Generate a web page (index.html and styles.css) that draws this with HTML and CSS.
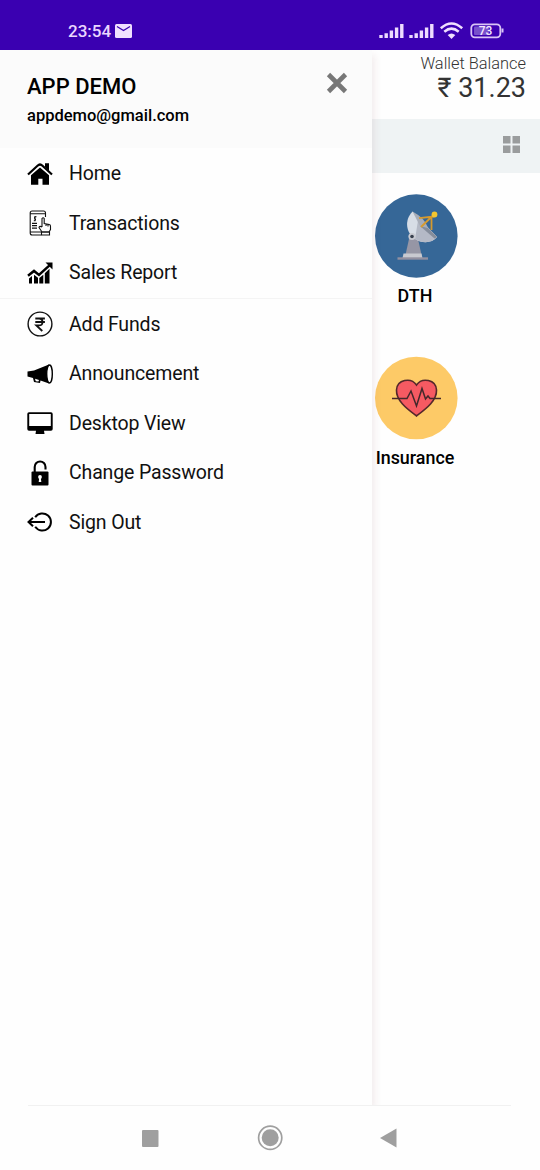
FILE: index.html
```
<!DOCTYPE html>
<html lang="en">
<head>
<meta charset="utf-8">
<title>App Demo</title>
<link rel="stylesheet" href="styles.css">
</head>
<body>
<div class="screen">
  <header class="status">
    <div class="status-left"><span class="clock">23:54</span>
      <svg width="17" height="14" viewBox="0 0 17 14"><rect width="17" height="14" rx="1.5" fill="#f0e0ff"/><path d="M2 2.500 8.500 6.500 15 2.500" fill="none" stroke="#3a00b1" stroke-width="1.3"/></svg>
    </div>
    <svg class="status-icons" width="126" height="18" viewBox="0 0 126 18">
      <g stroke="#eedcff" stroke-width="3.400">
        <path d="M2 13v3M7.200 11.200V16M12.400 8.500V16M17.600 5.500V16M22.800 2V16"/>
        <path d="M32 13v3M37.200 11.200V16M42.400 8.500V16M47.600 5.500V16M52.800 2V16"/>
      </g>
      <g fill="none" stroke="#f0e0ff" stroke-width="2.500"><path d="M61.800 6.300Q72.500-3.300 83.200 6.300M65.300 9.700q7.200-6.200 14.400 0"/></g>
      <path d="M68.700 13q3.800-3 7.600 0l-3.800 4z" fill="#f0e0ff"/>
      <rect x="92.300" y="2.300" width="29" height="13" rx="3.500" fill="none" stroke="#d9c3f6" stroke-width="1.800"/>
      <rect x="95" y="4.500" width="15" height="8.600" rx="1" fill="#7850cb"/>
      <path d="M123.500 6.500v4" stroke="#d9c3f6" stroke-width="2"/>
      <text x="106.500" y="13.200" class="battery">73</text>
    </svg>
  </header>
  <main class="body">
    <aside class="drawer">
      <div class="profile">
        <div><div class="name">APP DEMO</div><div class="email">appdemo@gmail.com</div></div>
        <svg class="close" width="22" height="22" viewBox="0 0 22 22"><path d="M2.500 2.500l17 17m0-17l-17 17" stroke="#777" stroke-width="4.600"/></svg>
      </div>
      <nav class="menu">
        <a class="item"><svg class="icon" viewBox="0 0 26 26"><path d="M18 2.300h4v7.500l-4-3.700zM4 14.300 13 6.500l9 7.800V23.700h-6.500v-6h-4.200v6H4z"/><path d="M1 13.500 10.500 4.700Q13 2.300 15.500 4.700L25 13.500" fill="none" stroke="#000" stroke-width="2.200"/></svg><span class="label">Home</span></a>
        <a class="item"><svg class="icon" viewBox="0 0 26 26"><g fill="none" stroke="#111" stroke-width="1.100"><path d="M18.500 7V3q0-2-2-2H5.200q-2 0-2 2v20q0 2 2 2h9M3.200 3.700h15.300M3.200 22h11"/><path d="M5 13.300h5M5 15.700h5M5 18.200h5" stroke-width="1.300"/><path d="M9.500 6.800H8q-1 1.500 0 1.900t0 2H6.800M8 6v5.300"/><path d="M15 17V8.500q1.200-1.500 2.200 0v5l5 1q1.500.3 1.300 2v3l-1.500 2.500h-7l-3-4.500q.5-2 3-.5M19 14v2M21 14.500v2"/><path d="M14.500 22h8v3h-8z"/></g></svg><span class="label">Transactions</span></a>
        <a class="item"><svg class="icon" viewBox="0 0 26 26"><path d="M2 18.500 5 16v7.500H2zM7 14.800l4 3v5.700H7zM12.300 18l4-3.300v8.800h-4zM17.800 13.200l4.700-4.500v14.800h-4.700z"/><path d="M1 15.700 7 10.900l5 4L22.500 5.400" fill="none" stroke="#000" stroke-width="2.500"/><path d="M18.500 2.600h7v6.800z"/></svg><span class="label">Sales Report</span></a>
        <div class="divider"></div>
        <a class="item"><svg class="icon" viewBox="0 0 26 26"><g fill="none" stroke="#111"><circle cx="13" cy="13" r="11.900" stroke-width="1.400"/><path d="M8.300 7.500h9.600M8.300 11h9.600M9 7.500h3q3.500 0 3.500 3.500T12 14.400H9.300l6 5.600" stroke-width="1.800"/></g></svg><span class="label">Add Funds</span></a>
        <a class="item"><svg class="icon" viewBox="0 0 26 26"><path d="M.5 10.500 7 9.500 22 3.500v19L13.500 19.500 13 22 7 21 6 17 .5 15.500z"/><ellipse cx="22.500" cy="13" rx="2.800" ry="9" fill="#fff" stroke="#000" stroke-width="1.400"/><path d="m8 17.700 4 1.200-.6 1.700-2.600-.4z" fill="#fff"/></svg><span class="label">Announcement</span></a>
        <a class="item"><svg class="icon" viewBox="0 0 26 26"><path fill-rule="evenodd" d="M2 2.300h22q1.700 0 1.700 1.700v15q0 1.700-1.700 1.700h-7l.5 3.300h-9l.5-3.300H2Q.3 20.700.3 19V4Q.3 2.300 2 2.300zm.2 1.700v11.900h21.600V4z"/></svg><span class="label">Desktop View</span></a>
        <a class="item"><svg class="icon" viewBox="0 0 26 26"><path d="M7.700 13V6.900a5.400 5.400 0 0 1 10.800 0v2.500" fill="none" stroke="#000" stroke-width="2.100"/><rect x="4.500" y="11.600" width="17" height="14" rx="1"/><circle cx="13" cy="17" r="1.900" fill="#fff"/><path d="M12.200 17.500h1.600l.5 4.500h-2.600z" fill="#fff"/></svg><span class="label">Change Password</span></a>
        <a class="item"><svg class="icon" viewBox="0 0 26 26"><path d="M8.200 8.200a8.600 8.600 0 1 1 0 9.600M18 13H2M6 8.700 1.500 13 6 17.300" fill="none" stroke="#000" stroke-width="2"/></svg><span class="label">Sign Out</span></a>
      </nav>
    </aside>
    <section class="content">
      <div class="wallet"><div class="wallet-label">Wallet Balance</div><div class="amount">₹ 31.23</div></div>
      <div class="toolbar"><svg width="17" height="17" viewBox="0 0 17 17"><path d="M0 0h7.500v7.500H0zM9.500 0H17v7.500H9.500zM0 9.500h7.500V17H0zM9.500 9.500H17V17H9.500z" fill="#9a9c9d"/></svg></div>
      <div class="services">
        <div class="service">
          <svg width="83" height="84" viewBox="0 0 83 84"><ellipse cx="41.300" cy="42" rx="41.300" ry="41.800" fill="#366797"/>
            <path d="M34 45h9l4 18H30z" fill="#9696a5"/>
            <path d="M37.500 17.500C29 26 31 39 40 45 48 50 57 49 62 43z" fill="#d7dde6"/>
            <path d="M43.500 23.500 62 43C57 49 48 50 40 45z" fill="#b4b9c6"/>
            <path d="M37.500 17.500Q50 24 53 34L45 32z" fill="#a8adb8"/>
            <path d="M53 34 62 43l-2.500 1.500L45 32z" fill="#858d9b"/>
            <path d="M44 24.200 59 22.500M56.500 36V23M46 33 59 20.500" fill="none" stroke="#d69a2e" stroke-width="1.800"/>
            <circle cx="59.500" cy="20.500" r="2.900" fill="#f4c62f"/>
            <circle cx="37" cy="42.500" r="3.600" fill="#c9cbd2"/><circle cx="37" cy="42.500" r="1.800" fill="#38404e"/><path d="M28.500 59.500h18l1 4.500h-20z" fill="#c8c9d0"/><path d="M22.500 63.300h30.500v2.400H22.500z" fill="#9290a0"/></svg>
          <div class="service-name">DTH</div>
        </div>
        <div class="service">
          <svg width="83" height="84" viewBox="0 0 83 84"><circle cx="41.300" cy="42" r="41.300" fill="#fdca67"/><path d="M41.500 60C33 53.500 21 45 21.500 34 22 23.500 36 21 41.500 29 47 21 61 23.500 61.500 34 62 45 50 53.500 41.500 60z" fill="#f65a62" stroke="#55282b" stroke-width="1.600"/><path d="M17 42.500h15l4-7.500 5.500 15L47 32.500l3.500 10.500 2.500-3 2 2.500H66" fill="none" stroke="#44282b" stroke-width="1.500"/></svg>
          <div class="service-name">Insurance</div>
        </div>
      </div>
    </section>
  </main>
  <footer class="navbar">
    <svg width="17" height="17" viewBox="0 0 17 17"><rect width="16.500" height="17" rx="1" fill="#9f9f9f"/></svg>
    <svg width="26" height="26" viewBox="0 0 26 26"><circle cx="13.200" cy="12.800" r="11.600" fill="none" stroke="#9f9f9f" stroke-width="1.700"/><circle cx="13.200" cy="12.800" r="8.500" fill="#9f9f9f"/></svg>
    <svg width="17" height="20" viewBox="0 0 17 20"><path d="M0 10 16.500.5v19z" fill="#9f9f9f"/></svg>
  </footer>
</div>
</body>
</html>
```
FILE: styles.css
```
* { box-sizing: border-box; }
body { margin: 0; background: #fff; font-family: Roboto, "Noto Sans", sans-serif; color: #000; }
svg { display: block; flex: none; }
.screen { width: 540px; height: 1170px; display: flex; flex-direction: column; overflow: hidden; background: #fefefe; }
.status { height: 50px; background: #3a00b1; display: flex; justify-content: space-between; padding: 22px 35px 0 68px; }
.status-left { display: flex; gap: 4px; align-items: center; height: 18px; }
.clock { font-size: 17px; line-height: 18px; font-weight: 500; color: #ead7ff; }
.battery { font: 500 12px Roboto, sans-serif; fill: #f4e8ff; text-anchor: middle; }
.body { display: flex; height: 1055px; }
.drawer { width: 372px; flex: none; background: #fefefe; box-shadow: 3px 5px 7px rgba(110, 40, 50, .08); position: relative; clip-path: inset(0 -12px 0 0); }
.profile { height: 98px; background: #fbfbfb; display: flex; justify-content: space-between; padding: 22px 24px 0 27px; }
.name { font-size: 22px; line-height: 30px; font-weight: 500; }
.email { font-size: 16.500px; line-height: 27px; font-weight: 500; }
.menu { padding-top: 1px; }
.item { height: 49.500px; display: flex; align-items: center; gap: 16px; padding-left: 27px; font-size: 19.500px; letter-spacing: -.15px; color: #111; }
.label { line-height: 23px; }
.icon { width: 26px; height: 26px; }
.divider { height: 2px; border-top: 1px solid #f4f4f4; }
.content { width: 168px; }
.wallet { height: 69px; padding: 4px 14px 0 0; text-align: right; white-space: nowrap; color: #333; }
.wallet-label { font-size: 16.400px; line-height: 20px; font-weight: 300; }
.amount { font-size: 27px; line-height: 28px; }
.toolbar { height: 54px; background: #eff3f4; display: flex; justify-content: flex-end; padding: 17px 20px 0 0; }
.services { padding: 21px 0 0 3px; width: 86px; }
.service { height: 162px; display: flex; flex-direction: column; align-items: center; }
.service-name { margin-top: 7px; padding-right: 3px; font-size: 17.900px; line-height: 22px; font-weight: 500; }
.navbar { height: 65px; margin: 0 29px 0 28px; border-top: 1px solid #f1f1f1; display: flex; justify-content: space-between; align-items: center; padding: 0 114px 0 114px; }
```
